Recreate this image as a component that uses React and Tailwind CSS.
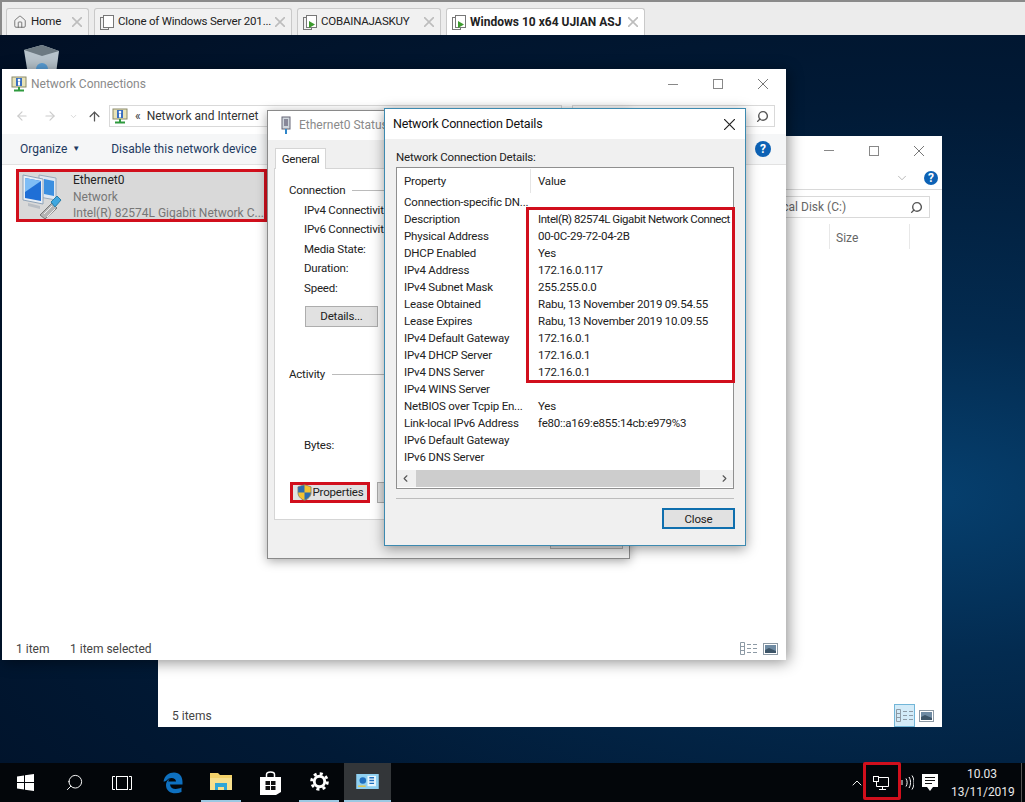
import { Home, ArrowLeft, ArrowRight, ArrowUp, ChevronDown, ChevronUp, ChevronLeft, ChevronRight, Search } from "lucide-react";

const properties = [
  ["Connection-specific DN...", ""],
  ["Description", "Intel(R) 82574L Gigabit Network Connect"],
  ["Physical Address", "00-0C-29-72-04-2B"],
  ["DHCP Enabled", "Yes"],
  ["IPv4 Address", "172.16.0.117"],
  ["IPv4 Subnet Mask", "255.255.0.0"],
  ["Lease Obtained", "Rabu, 13 November 2019 09.54.55"],
  ["Lease Expires", "Rabu, 13 November 2019 10.09.55"],
  ["IPv4 Default Gateway", "172.16.0.1"],
  ["IPv4 DHCP Server", "172.16.0.1"],
  ["IPv4 DNS Server", "172.16.0.1"],
  ["IPv4 WINS Server", ""],
  ["NetBIOS over Tcpip En...", "Yes"],
  ["Link-local IPv6 Address", "fe80::a169:e855:14cb:e979%3"],
  ["IPv6 Default Gateway", ""],
  ["IPv6 DNS Server", ""],
];

const CloseGlyph = ({ size = 10, stroke = "#777", width = 1 }) => (
  <svg width={size} height={size} viewBox="0 0 10 10" className="shrink-0">
    <path d="M0 0l10 10M10 0L0 10" stroke={stroke} strokeWidth={width} fill="none" />
  </svg>
);

const WindowButtons = () => (
  <div className="flex items-center">
    <div className="w-[10px] border-t border-[#888]" />
    <div className="w-[10px] h-[10px] border border-[#888] ml-[35px]" />
    <div className="ml-[35px]">
      <CloseGlyph />
    </div>
  </div>
);

const VmIcon = ({ running }) => (
  <svg width="14" height="15" viewBox="0 0 14 15" className="shrink-0">
    <rect x="0.5" y="2.5" width="8" height="12" fill="none" stroke="#777" />
    <rect x="3.5" y="0.5" width="10" height="12" fill="#fff" stroke="#777" />
    {running && <path d="M6 6l6 3.500-6 3.500z" fill="#3d9a2e" />}
  </svg>
);

const Tab = ({ width, active, running, icon, children }) => (
  <div
    className={`flex items-center h-[27px] pl-[5px] pr-[6px] gap-[4px] rounded-t-[3px] border border-b-0 border-[#c9c9c9] ${width} ${
      active ? "bg-white font-bold text-[12px]" : "bg-[#f1f1f1] text-[11.5px] tracking-[-0.2px]"
    }`}
  >
    {icon || <VmIcon running={running} />}
    <span className="flex-1 whitespace-nowrap text-[#222]">{children}</span>
    <CloseGlyph size={10} stroke="#bdbdbd" width={1.6} />
  </div>
);

const ConnIcon = ({ size = 16 }) => (
  <svg width={size} height={size} viewBox="0 0 16 16" className="shrink-0">
    <rect x="1" y="1" width="14" height="10" fill="#e8e3b8" stroke="#8a8a6a" />
    <rect x="5" y="2" width="6" height="8" fill="#3a6fc0" />
    <circle cx="8" cy="4" r="1.300" fill="#fff" />
    <rect x="7" y="5.500" width="2" height="4" fill="#fff" />
    <path d="M8 11v3M3 14.500h10" stroke="#2f9a3e" strokeWidth="2" />
  </svg>
);

const NetworkIcon = () => (
  <svg width="46" height="48" viewBox="0 0 46 48" className="shrink-0">
    <path d="M19 3l17 3v22l-17-3z" fill="#dfe8f2" stroke="#9ab" />
    <path d="M24 7l10 2v15l-10-2z" fill="#3b8fe0" />
    <path d="M3 3l20 4v25L3 28z" fill="#e8eef5" stroke="#8fa3b8" />
    <path d="M5 6l16 3v20L5 26z" fill="#1f6fd6" />
    <path d="M5 6l16 3-16 11z" fill="#7fbdf5" />
    <path d="M8 31l12 3v3L8 34z" fill="#b9bec4" />
    <path d="M20 43l12-12 5 5-12 11z" fill="#b5b5b5" stroke="#777" />
    <path d="M31 30l6-6 4 4-6 7z" fill="#3fa7e0" stroke="#2a7ea8" />
    <path d="M24 42l8-8M27 45l8-8" stroke="#ededed" />
  </svg>
);

const ShieldIcon = () => (
  <svg width="15" height="17" viewBox="0 0 16 18" className="shrink-0">
    <path d="M8 .500l7 2.500v6c0 4-3 7-7 8.500C4 16 1 13 1 9V3z" fill="#f2c230" stroke="#555" strokeWidth=".600" />
    <path d="M8 1v8H1.200V3.200zM8 9h6.800C14.500 12.800 11.800 15.700 8 17z" fill="#2b6cb0" />
  </svg>
);

const HelpDot = ({ size }) => (
  <div className={`${size} rounded-full bg-[#0d62b5] text-white font-bold text-[12px] flex items-center justify-center`}>
    ?
  </div>
);

const SearchGlyph = () => <Search size={13} className="text-[#555] -scale-x-100" strokeWidth={2.6} />;

const ListView = () => (
  <svg width="17" height="13" viewBox="0 0 17 13" fill="none" stroke="#8d9aa5">
    <path d="M.500.500h4v12h-4zM.500 4.500h4M.500 8.500h4" />
    <path d="M7 2.500h4M13 2.500h4M7 6.500h4M13 6.500h4M7 10.500h4M13 10.500h4" />
  </svg>
);

const ThumbView = () => (
  <svg width="15" height="12" viewBox="0 0 15 12">
    <rect x=".500" y=".500" width="14" height="11" fill="#fff" stroke="#8d9aa5" />
    <rect x="2" y="2" width="11" height="8" fill="#6f8ba3" />
    <path d="M2 7l4-2 7 3v2H2z" fill="#3d5568" />
  </svg>
);

const BackWindow = () => (
  <div className="absolute left-[158px] top-[136px] w-[784px] h-[591px] bg-white flex flex-col">
    <div className="flex justify-end items-center h-[28px] pt-[1px] pr-[18px]">
      <WindowButtons />
    </div>
    <div className="flex justify-end items-center gap-[15px] h-[26px] pt-[2px] pr-[4px] border-b border-[#d9d9d9]">
      <ChevronDown size={14} strokeWidth={1} className="text-[#888]" />
      <HelpDot size="w-[14px] h-[14px]" />
    </div>
    <div className="flex justify-end mt-[6px] pr-[12px]">
      <div className="w-[250px] h-[22px] border border-[#d9d9d9] flex items-center justify-between pr-[6px] pl-[88px] text-[12px] text-[#666]">
        <span>Local Disk (C:)</span>
        <SearchGlyph />
      </div>
    </div>
    <div className="flex justify-end mt-[6px] pr-[32px]">
      <div className="w-[81px] h-[25px] pt-[3px] border-x border-[#e8e8e8] pl-[6px] flex items-center text-[12px] text-[#666]">
        Size
      </div>
    </div>
    <div className="flex-1" />
    <div className="flex items-center justify-between h-[23px] pl-[14px] pr-[8px] text-[12px] text-[#444]">
      <span>5 items</span>
      <div className="flex items-center gap-[4px]">
        <div className="w-[21px] h-[23px] bg-[#d3ebf8] border border-[#72b6d8] flex items-center justify-center">
          <ListView />
        </div>
        <ThumbView />
      </div>
    </div>
  </div>
);

const ConnectionsWindow = () => (
  <div className="absolute left-[2px] top-[69px] w-[784px] h-[591px] bg-white flex flex-col shadow-[2px_2px_14px_rgba(0,0,0,0.45)]">
    <div className="flex items-center h-[30px] pl-[9px] pr-[18px] text-[12px] text-[#8a8a8a] gap-[4px]">
      <ConnIcon />
      <span className="flex-1">Network Connections</span>
      <WindowButtons />
    </div>
    <div className="flex items-center h-[22px] mt-[6px] pl-[13px] pr-[11px]">
      <ArrowLeft size={14} className="text-[#ccc]" />
      <ArrowRight size={14} className="text-[#ccc] ml-[14px]" />
      <ChevronDown size={9} className="text-[#ccc] ml-[12px]" />
      <ArrowUp size={15} className="text-[#555] ml-[9px]" />
      <div className="flex-1 h-[22px] ml-[7px] border border-[#d9d9d9] flex items-center pl-[2px] text-[12px] text-[#333]">
        <ConnIcon size={16} />
        <span className="ml-[7px]">«</span>
        <span className="ml-[6px]">Network and Internet</span>
      </div>
      <div className="w-[203px] h-[22px] ml-[10px] border border-[#d9d9d9] flex items-center justify-end pr-[5px]">
        <SearchGlyph />
      </div>
    </div>
    <div className="flex items-center h-[31px] bg-[#f5f6f7] border-b border-[#e2e2e2] pl-[18px] pr-[15px] mt-[7px] text-[12px] text-[#1e3a5f]">
      <span>Organize</span>
      <span className="ml-[5px] text-[8px]">▼</span>
      <span className="ml-[31px] flex-1">Disable this network device</span>
      <HelpDot size="w-[16px] h-[16px]" />
    </div>
    <div className="flex mt-[5px] ml-[15px] w-[248px] h-[52px] bg-[#d9d9d9] pl-[3px] pt-[2px] gap-[7px]">
      <NetworkIcon />
      <div className="text-[12px] leading-[16.500px] text-[#777] whitespace-nowrap">
        <div className="text-[#222]">Ethernet0</div>
        <div>Network</div>
        <div>Intel(R) 82574L Gigabit Network C...</div>
      </div>
    </div>
    <div className="flex-1" />
    <div className="flex items-center h-[23px] pl-[14px] pr-[8px] text-[12px] text-[#444]">
      <span className="w-[54px]">1 item</span>
      <span className="flex-1">1 item selected</span>
      <div className="flex items-center gap-[6px]">
        <ListView />
        <ThumbView />
      </div>
    </div>
  </div>
);

const StatusWindow = () => (
  <div className="absolute left-[267px] top-[110px] w-[363px] h-[449px] bg-[#f0f0f0] border border-[#8a8a8a] flex flex-col shadow-[0_2px_10px_rgba(0,0,0,0.35)] text-[11.5px] tracking-[-0.2px] leading-[17px] text-[#222]">
    <div className="flex items-center h-[29px] bg-white pl-[12px] gap-[7px] text-[12px] tracking-normal text-[#8a8a8a]">
      <svg width="12" height="20" viewBox="0 0 12 20">
        <rect x="2" y="1" width="8" height="12" fill="#cfd6dc" stroke="#667" />
        <rect x="4" y="3" width="4" height="7" fill="#889" />
        <rect x="5" y="13" width="2" height="5" fill="#2f86c9" />
      </svg>
      <span>Ethernet0 Status</span>
    </div>
    <div className="flex pl-[7px] mt-[8px] relative z-10">
      <div className="h-[21px] w-[51px] -mb-[1px] bg-white border border-b-0 border-[#d5d5d5] flex items-center justify-center">
        General
      </div>
    </div>
    <div className="mx-[6px] h-[352px] bg-white border border-[#d5d5d5]">
      <div className="flex flex-col pl-[14px] pt-[13px]">
        <div className="flex items-center gap-[7px] h-[17px]">
          Connection
          <div className="w-[40px] border-t border-[#bbb]" />
        </div>
        <div className="pl-[15px] pt-[2px] flex flex-col leading-[19.400px]">
          <span>IPv4 Connectivit</span>
          <span>IPv6 Connectivit</span>
          <span>Media State:</span>
          <span>Duration:</span>
          <span>Speed:</span>
        </div>
        <div className="ml-[16px] mt-[8px] w-[73px] h-[21px] bg-[#e1e1e1] border border-[#adadad] flex items-center justify-center">
          Details...
        </div>
        <div className="flex items-center gap-[7px] mt-[39px] h-[17px]">
          Activity
          <div className="w-[60px] border-t border-[#bbb]" />
        </div>
        <div className="pl-[15px] mt-[54px]">Bytes:</div>
        <div className="flex mt-[28px] ml-[1px] gap-[7px]">
          <div className="relative w-[80px] h-[21px] flex items-center justify-center gap-[1px] bg-[#e1e1e1] border-[3px] border-[#d10f1c]">
            <ShieldIcon />
            Properties
          </div>
          <div className="w-[30px] h-[21px] bg-[#e1e1e1] border border-[#adadad]" />
        </div>
      </div>
    </div>
    <div className="flex justify-end mt-[7px] pr-[6px]">
      <div className="w-[73px] h-[22px] bg-[#e1e1e1] border border-[#adadad]" />
    </div>
  </div>
);

const DetailsDialog = () => (
  <div className="absolute left-[384px] top-[108px] w-[362px] h-[438px] bg-[#f0f0f0] border border-[#3d8ab0] flex flex-col shadow-[0_3px_12px_rgba(0,0,0,0.4)] text-[11.5px] tracking-[-0.2px] leading-[16px] text-[#222]">
    <div className="flex items-center justify-between h-[30px] bg-white pl-[8px] pr-[10px]">
      <span className="text-[12.500px] text-[#111]">Network Connection Details</span>
      <CloseGlyph size={11} stroke="#222" width={1.1} />
    </div>
    <div className="pl-[11px] mt-[10px] h-[16px]">Network Connection Details:</div>
    <div className="mx-[11px] mt-[2px] h-[322px] bg-white border border-[#8f8f8f] flex flex-col">
      <div className="flex h-[24px] mt-[1px] items-center">
        <span className="w-[134px] pl-[7px] border-r border-[#e5e5e5] h-full flex items-center">Property</span>
        <span className="pl-[7px]">Value</span>
      </div>
      <div className="flex flex-col flex-1">
        {properties.map(([name, value]) => (
          <div key={name} className="flex h-[17px] items-center whitespace-nowrap overflow-hidden">
            <span className="w-[134px] pl-[7px] shrink-0">{name}</span>
            <span className={name === "Description" ? "pl-[7px] tracking-[-0.44px]" : "pl-[7px]"}>{value}</span>
          </div>
        ))}
      </div>
      <div className="flex items-center h-[17px] bg-[#f0f0f0] px-[3px] mb-[1px]">
        <ChevronLeft size={11} className="text-[#555]" strokeWidth={2.5} />
        <div className="ml-[5px] w-[284px] h-full bg-[#cdcdcd]" />
        <div className="flex-1" />
        <ChevronRight size={11} className="text-[#555]" strokeWidth={2.5} />
      </div>
    </div>
    <div className="mx-[11px] mt-[9px] border-t border-[#bdbdbd]" />
    <div className="flex justify-end mt-[9px] pr-[10px]">
      <div className="w-[73px] h-[21px] bg-[#e1e1e1] border-2 border-[#0f6fae] flex items-center justify-center">
        Close
      </div>
    </div>
  </div>
);

const WinLogo = () => (
  <svg width="17" height="17" viewBox="0 0 17 17">
    <path d="M0 2.400l7-1v6.600H0zM8 1.200L17 0v8H8zM0 9h7v6.600l-7-1zM8 9h9v8l-9-1.200z" fill="#fff" />
  </svg>
);

const EdgeIcon = () => (
  <svg width="20" height="22" viewBox="0 0 20 22">
    <path d="M.500 9.500C1.500 3.500 6 .500 11 .500c5.500 0 8.500 4 8.500 9.500v2.500H7c.5 5 6.500 5.500 11.500 3v4.500c-7 3-15.500 1-15.500-7 0-3 1.500-5 4-6.500-1 1-1.500 2-1.800 3h7.800c0-4-6.500-5-9.500-1-.8.700-1.500 1-3 1z" fill="#0e70c0" />
  </svg>
);

const FolderIcon = () => (
  <svg width="22" height="19" viewBox="0 0 22 19">
    <path d="M0 1h8l2 2h12v15H0z" fill="#f4d26a" />
    <path d="M0 6h22v12H0z" fill="#f7e08e" />
    <path d="M5 11h12v7h-3v-3H8v3H5z" fill="#2ea6d8" />
  </svg>
);

const StoreIcon = () => (
  <svg width="21" height="24" viewBox="0 0 21 24">
    <path d="M6.500 6V3.500C6.500 1.800 8 1 10.500 1s4 .8 4 2.500V6" fill="none" stroke="#fff" strokeWidth="1.500" />
    <path d="M0 6h21v15l-5 3H0z" fill="#fff" />
    <path d="M5.500 10h4.500v4H5.500zM11 10h4.500v4H11zM5.500 15h4.500v4H5.500zM11 15h4.500v4H11z" fill="#111" />
  </svg>
);

const GearIcon = () => (
  <svg width="19" height="19" viewBox="0 0 20 20" fill="none" stroke="#fff">
    <circle cx="10" cy="10" r="8.300" strokeWidth="3" strokeDasharray="3.200 3.320" />
    <circle cx="10" cy="10" r="5.500" strokeWidth="3" />
  </svg>
);

const ManagerIcon = () => (
  <svg width="23" height="15" viewBox="0 0 24 16">
    <rect width="24" height="16" fill="#8fd0f2" />
    <circle cx="7" cy="7" r="3.500" fill="#1f6fc0" />
    <rect x="12" y="2" width="9" height="11" fill="#e8f6fd" />
    <path d="M14 4h5M14 7h5M14 10h5" stroke="#1f6fc0" strokeWidth="1.500" />
    <path d="M2 13h8" stroke="#e8c440" strokeWidth="1.500" />
  </svg>
);

const TaskViewIcon = () => (
  <svg width="20" height="14" viewBox="0 0 20 14" fill="none" stroke="#fff">
    <path d="M3 .500H.500v13H3M17 .500h2.500v13H17" />
    <rect x="4.500" y=".500" width="11" height="13" />
  </svg>
);

const TrayNetwork = () => (
  <svg width="16" height="14" viewBox="0 0 16 14" fill="none" stroke="#fff">
    <path d="M5 1.500h10.500v9H3.500V6M9.500 10.500v3M6 13.500h7" />
    <rect x=".500" y=".500" width="5" height="5" />
  </svg>
);

const TrayVolume = () => (
  <svg width="13" height="15" viewBox="0 0 13 15" fill="none" stroke="#fff">
    <path d="M1 5v5M5 3.500c1.500 2.500 1.500 5.500 0 8M8 2c2 3 2 8 0 11M11 .500c2.700 4 2.700 10 0 14" />
  </svg>
);

const TrayMessage = () => (
  <svg width="16" height="18" viewBox="0 0 16 18">
    <path d="M0 0h16v13h-5l-3 4-3-4H0z" fill="#fff" />
    <path d="M3 3.500h10M3 6.500h10M3 9.500h7" stroke="#111" />
  </svg>
);

const Taskbar = () => (
  <div className="absolute left-0 right-0 bottom-0 h-[39px] bg-[#03060a] flex items-center text-white">
    <div className="w-[50px] flex justify-center">
      <WinLogo />
    </div>
    <div className="w-[48px] flex justify-center">
      <Search size={19} strokeWidth={1.2} className="-scale-x-100" />
    </div>
    <div className="w-[48px] flex justify-center">
      <TaskViewIcon />
    </div>
    <div className="w-[54px] flex justify-center">
      <EdgeIcon />
    </div>
    <div className="w-[40px] ml-[1px] h-full flex items-center justify-center border-b-2 border-[#9cc8e2]">
      <FolderIcon />
    </div>
    <div className="w-[58px] flex justify-center">
      <StoreIcon />
    </div>
    <div className="w-[40px] h-full flex items-center justify-center border-b-2 border-[#9cc8e2]">
      <GearIcon />
    </div>
    <div className="w-[47px] ml-[5px] h-full flex items-center justify-center bg-[#333639] border-b-2 border-[#9cc8e2]">
      <ManagerIcon />
    </div>
    <div className="flex-1" />
    <ChevronUp size={16} strokeWidth={1.4} />
    <div className="ml-[8px]">
      <TrayNetwork />
    </div>
    <div className="ml-[12px]">
      <TrayVolume />
    </div>
    <div className="ml-[8px]">
      <TrayMessage />
    </div>
    <div className="w-[62px] ml-[13px] mr-[12px] text-[12px] leading-[18px] text-center text-[#e8e8e8]">
      <div>10.03</div>
      <div>13/11/2019</div>
    </div>
    <div className="absolute right-[3px] top-0 bottom-0 border-l border-[#555]" />
  </div>
);

export default function App() {
  return (
    <div className="relative w-[1025px] h-[802px] overflow-hidden bg-[#03203f] font-['Roboto','Liberation_Sans',sans-serif]">
      {/* vm tabs */}
      <div className="relative z-20 flex items-end gap-[5px] h-[35px] bg-[#ececec] pl-[4px] border-t-2 border-l-2 border-[#8a8a8a]">
        <Tab width="w-[83px]" icon={<Home size={14} strokeWidth={1.3} className="text-[#555] shrink-0 ml-[1px]" />}>
          Home
        </Tab>
        <Tab width="w-[198px]">Clone of Windows Server 201...</Tab>
        <Tab width="w-[144px]" running>
          COBAINAJASKUY
        </Tab>
        <Tab width="w-[199px]" active running>
          Windows 10 x64 UJIAN ASJ
        </Tab>
      </div>

      {/* desktop */}
      <div className="absolute left-0 right-0 top-[35px] bottom-0 bg-[radial-gradient(ellipse_at_90%_60%,#06406f_0%,#032b50_25%,#011a36_60%,#010f24_100%)]">
        <svg width="38" height="36" viewBox="0 0 38 36" className="absolute left-[22px] top-[10px]">
          <path d="M2 5L20 0l17 6-4 30H7z" fill="#b8c4cc" />
          <path d="M2 5l18 6 17-5-17-6z" fill="#6d7a82" />
          <circle cx="20" cy="24" r="6" fill="#5aa0d8" />
        </svg>
      </div>

      <BackWindow />
      <ConnectionsWindow />
      <div className="absolute left-[16px] top-[169px] w-[251px] h-[53px] border-[3px] border-[#d10f1c]" />
      <StatusWindow />
      <DetailsDialog />
      <div className="absolute left-[526px] top-[207px] w-[209px] h-[176px] border-[3px] border-[#d10f1c]" />
      <Taskbar />
      <div className="absolute left-[863px] top-[762px] w-[38px] h-[38px] border-[3px] border-[#d10f1c] rounded-[2px]" />
    </div>
  );
}
